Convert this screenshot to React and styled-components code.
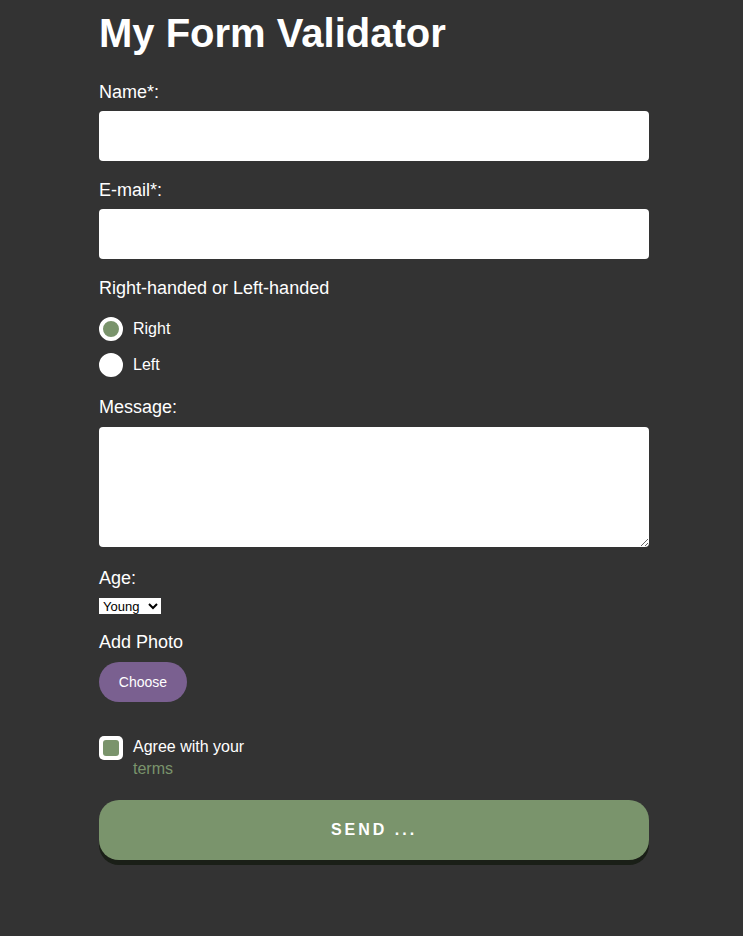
import React from 'react';
import styled, { createGlobalStyle } from 'styled-components';

const GlobalStyle = createGlobalStyle`
  html, body {
    margin: 0;
    padding: 0;
    background: #333333;
  }

  body {
    font-family: Arial, "Liberation Sans", sans-serif;
    color: #ffffff;
  }
`;

const Page = styled.main`
  padding: 0 94px 60px 99px;
`;

const Form = styled.form`
  display: flex;
  flex-direction: column;
  width: 550px;
`;

const Title = styled.h1`
  margin: 10px 0 26px;
  font-size: 40px;
  font-weight: bold;
  line-height: 46px;
`;

const Field = styled.div`
  display: flex;
  flex-direction: column;
  gap: ${(p) => (p.$gap !== undefined ? p.$gap : 8)}px;
  margin-bottom: ${(p) => (p.$mb !== undefined ? p.$mb : 19)}px;
`;

const Label = styled.label`
  font-size: 18px;
  line-height: 21px;
`;

const TextInput = styled.input`
  box-sizing: border-box;
  width: 100%;
  height: 50px;
  border: none;
  border-radius: 4px;
  background: #ffffff;
  padding: 0 12px;
  font-size: 16px;
  outline: none;
`;

const TextArea = styled.textarea`
  box-sizing: border-box;
  width: 100%;
  height: 120px;
  border: none;
  border-radius: 4px;
  background: #ffffff;
  padding: 10px 12px;
  font-size: 16px;
  outline: none;
`;

const Choice = styled.label`
  display: flex;
  align-items: center;
  gap: 10px;
  font-size: 16px;
  cursor: pointer;
`;

const RadioDot = styled.span`
  box-sizing: border-box;
  width: 24px;
  height: 24px;
  border-radius: 50%;
  background: ${(p) => (p.$checked ? '#7a946c' : '#ffffff')};
  border: 4px solid #ffffff;
`;

const RadioList = styled.div`
  display: flex;
  flex-direction: column;
  gap: 12px;
  margin-top: 18px;
`;

const Select = styled.select`
  align-self: flex-start;
  width: 62px;
  height: 16px;
  font-size: 13px;
  font-family: Arial, "Liberation Sans", sans-serif;
  padding: 0;
  border: none;
  border-radius: 0;
  background: #ffffff;
  color: #000000;
`;

const ChooseButton = styled.button`
  align-self: flex-start;
  width: 88px;
  height: 40px;
  border: none;
  border-radius: 20px;
  background: #7a6090;
  color: #ffffff;
  font-family: Arial, "Liberation Sans", sans-serif;
  font-size: 14px;
  cursor: pointer;
`;

const Agree = styled.div`
  display: flex;
  align-items: flex-start;
  gap: 10px;
  margin: 34px 0 20px;
`;

const CheckBox = styled.span`
  box-sizing: border-box;
  display: flex;
  width: 24px;
  height: 24px;
  padding: 4px;
  border-radius: 5px;
  background: #ffffff;

  &::after {
    content: '';
    flex: 1;
    border-radius: 3px;
    background: #7a946c;
  }
`;

const AgreeText = styled.div`
  display: flex;
  flex-direction: column;
  font-size: 16px;
  line-height: 22px;
`;

const TermsLink = styled.a`
  color: #7a946c;
  text-decoration: none;
`;

const SendButton = styled.button`
  width: 100%;
  height: 60px;
  border: none;
  border-radius: 20px;
  background: #7a946c;
  box-shadow: 0 5px 0 #1a1f17;
  color: #ffffff;
  font-family: Arial, "Liberation Sans", sans-serif;
  font-size: 16px;
  font-weight: bold;
  letter-spacing: 3px;
  cursor: pointer;
`;

const App = () => (
  <Page>
    <GlobalStyle />
    <Form onSubmit={(e) => e.preventDefault()}>
      <Title>My Form Validator</Title>

      <Field>
        <Label htmlFor='name'>Name*:</Label>
        <TextInput id='name' type='text' />
      </Field>

      <Field>
        <Label htmlFor='email'>E-mail*:</Label>
        <TextInput id='email' type='email' />
      </Field>

      <Field $mb={20} $gap={0}>
        <Label as='span'>Right-handed or Left-handed</Label>
        <RadioList>
          <Choice><RadioDot $checked />Right</Choice>
          <Choice><RadioDot />Left</Choice>
        </RadioList>
      </Field>

      <Field $gap={9} $mb={21}>
        <Label htmlFor='message'>Message:</Label>
        <TextArea id='message' />
      </Field>

      <Field $gap={9} $mb={18}>
        <Label htmlFor='age'>Age:</Label>
        <Select id='age' defaultValue='young'>
          <option value='young'>Young</option>
          <option value='adult'>Adult</option>
          <option value='old'>Old</option>
        </Select>
      </Field>

      <Field $gap={9} $mb={0}>
        <Label as='span'>Add Photo</Label>
        <ChooseButton type='button'>Choose</ChooseButton>
      </Field>

      <Agree>
        <CheckBox />
        <AgreeText>
          <span>Agree with your</span>
          <TermsLink href='#'>terms</TermsLink>
        </AgreeText>
      </Agree>

      <SendButton type='submit'>SEND ...</SendButton>
    </Form>
  </Page>
);

export default App;
